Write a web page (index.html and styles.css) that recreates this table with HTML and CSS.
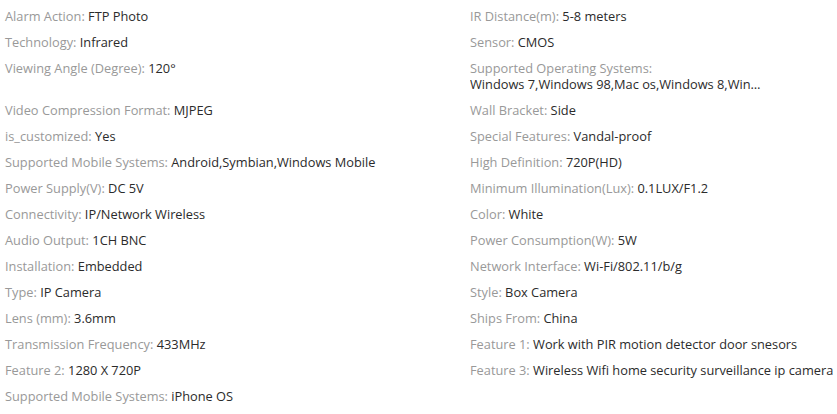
FILE: index.html
```html
<!DOCTYPE html>
<html lang="en">
<head>
    <meta charset="UTF-8">
    <meta name="viewport" content="width=device-width, initial-scale=1.0">
    <title>Item Specifics</title>
    <link rel="stylesheet" href="styles.css">
</head>
<body>

    <ul class="specs">
        <li><span class="name">Alarm Action:</span> <span class="val">FTP Photo</span></li>
        <li><span class="name">IR Distance(m):</span> <span class="val">5-8 meters</span></li>
        <li><span class="name">Technology:</span> <span class="val">Infrared</span></li>
        <li><span class="name">Sensor:</span> <span class="val">CMOS</span></li>
        <li><span class="name">Viewing Angle (Degree):</span> <span class="val">120°</span></li>
        <li><span class="name">Supported Operating Systems:</span> <span class="val long">Windows 7,Windows 98,Mac os,Windows 8,Windows 2000,Windows XP,Windows Vista</span></li>
        <li><span class="name">Video Compression Format:</span> <span class="val">MJPEG</span></li>
        <li><span class="name">Wall Bracket:</span> <span class="val">Side</span></li>
        <li><span class="name">is_customized:</span> <span class="val">Yes</span></li>
        <li><span class="name">Special Features:</span> <span class="val">Vandal-proof</span></li>
        <li><span class="name">Supported Mobile Systems:</span> <span class="val">Android,Symbian,Windows Mobile</span></li>
        <li><span class="name">High Definition:</span> <span class="val">720P(HD)</span></li>
        <li><span class="name">Power Supply(V):</span> <span class="val">DC 5V</span></li>
        <li><span class="name">Minimum Illumination(Lux):</span> <span class="val">0.1LUX/F1.2</span></li>
        <li><span class="name">Connectivity:</span> <span class="val">IP/Network Wireless</span></li>
        <li><span class="name">Color:</span> <span class="val">White</span></li>
        <li><span class="name">Audio Output:</span> <span class="val">1CH BNC</span></li>
        <li><span class="name">Power Consumption(W):</span> <span class="val">5W</span></li>
        <li><span class="name">Installation:</span> <span class="val">Embedded</span></li>
        <li><span class="name">Network Interface:</span> <span class="val">Wi-Fi/802.11/b/g</span></li>
        <li><span class="name">Type:</span> <span class="val">IP Camera</span></li>
        <li><span class="name">Style:</span> <span class="val">Box Camera</span></li>
        <li><span class="name">Lens (mm):</span> <span class="val">3.6mm</span></li>
        <li><span class="name">Ships From:</span> <span class="val">China</span></li>
        <li><span class="name">Transmission Frequency:</span> <span class="val">433MHz</span></li>
        <li><span class="name">Feature 1:</span> <span class="val">Work with PIR motion detector door snesors</span></li>
        <li><span class="name">Feature 2:</span> <span class="val">1280 X 720P</span></li>
        <li><span class="name">Feature 3:</span> <span class="val">Wireless Wifi home security surveillance ip camera</span></li>
        <li><span class="name">Supported Mobile Systems:</span> <span class="val">iPhone OS</span></li>
    </ul>

</body>
</html>
```

FILE: styles.css
```css
body {
    font-family: 'Open Sans', 'Liberation Sans', sans-serif;
    background: #fff;
    margin: 0;
    padding: 0;
}

.specs {
    list-style: none;
    margin: 0;
    padding: 8px 0 0 5px;
    display: grid;
    grid-template-columns: 465px 1fr;
    row-gap: 10px;
    font-size: 12.8px;
    line-height: 16px;
}

.specs li {
    margin: 0;
}

.name {
    color: #999;
}

.val {
    color: #2b2b2b;
    white-space: nowrap;
}

/* values too long for one line drop under the name and get cut */
.val.long {
    display: block;
    max-width: 296px;
    overflow: hidden;
    text-overflow: ellipsis;
}
```
